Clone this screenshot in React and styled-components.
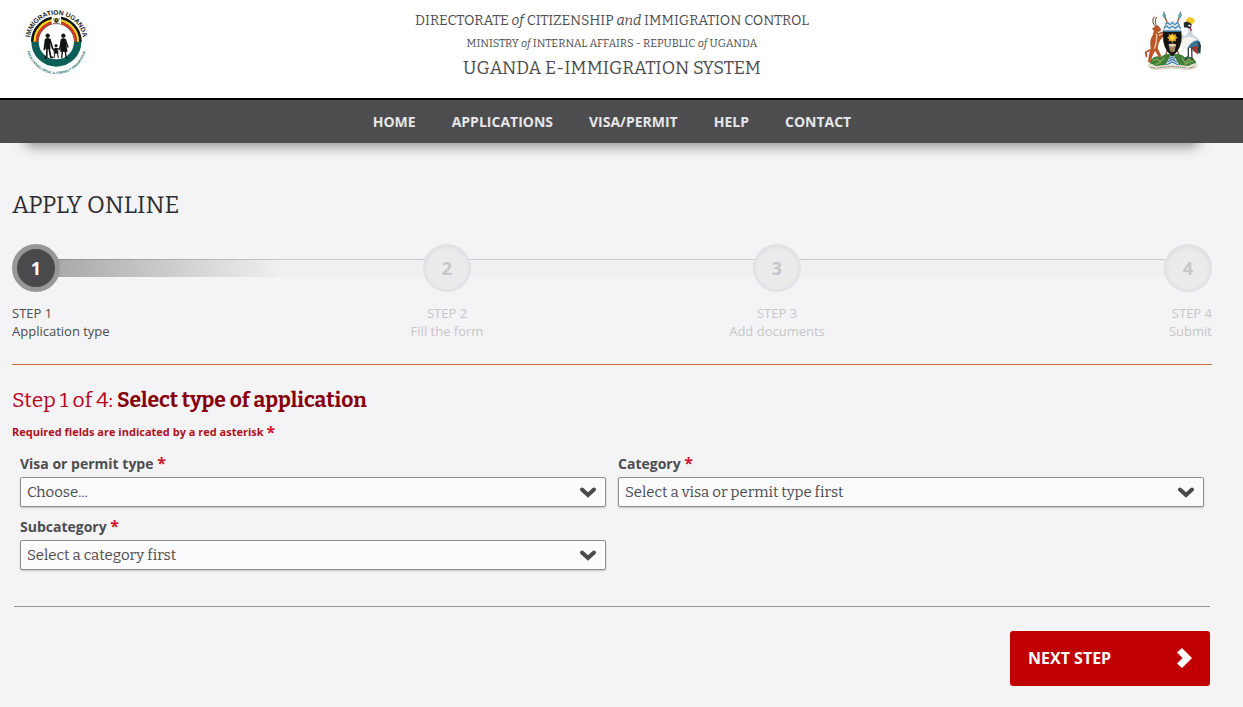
import { useState } from 'react'
import styled, { createGlobalStyle } from 'styled-components'

const serif = `'Bitter', 'DejaVu Serif Condensed', 'DejaVu Serif', serif`
const sans = `'Open Sans', 'Noto Sans', sans-serif`

const GlobalStyle = createGlobalStyle`
  * {
    box-sizing: border-box;
  }

  body {
    margin: 0;
    background: #f4f4f6;
    color: #4d4d4f;
    font-family: ${sans};
  }
`

const Header = styled.header`
  display: flex;
  justify-content: space-between;
  align-items: flex-start;
  padding: 6px 37px 0 18px;
  height: 98px;
  background: #fff;
`

const Titles = styled.div`
  padding-top: 4px;
  text-align: center;
  font-family: ${serif};
`

const Title = styled.p`
  margin: 0;
  font-size: ${(props) => props.$size}px;
  line-height: ${(props) => props.$line}px;
  white-space: nowrap;
`

const Nav = styled.nav`
  border-top: 2px solid #000;
  background: #4d4d4f;
`

const Menu = styled.ul`
  display: flex;
  justify-content: center;
  gap: 36px;
  margin: 0 31px 0 12px;
  padding: 0;
  list-style: none;
  box-shadow: 0 16px 14px -14px rgba(0, 0, 0, 0.5);
`

const MenuLink = styled.a`
  display: block;
  color: #e6e6e8;
  font-size: 14px;
  font-weight: 700;
  line-height: 43px;
  text-decoration: none;
`

const Main = styled.main`
  padding: 46px 31px 20px 12px;
`

const PageTitle = styled.h1`
  margin: 0;
  color: #2d2d2f;
  font-family: ${serif};
  font-size: 24px;
  font-weight: 400;
  line-height: 32px;
`

const Steps = styled.ol`
  display: grid;
  grid-template-columns: 9fr 11fr 11fr 9fr;
  margin: 23px 0 0;
  padding: 0 0 24px;
  border-bottom: 1px solid #c9703f;
  list-style: none;
`

const Step = styled.li`
  display: flex;
  flex-direction: column;
  align-items: ${(props) => props.$align};
  color: ${(props) => (props.$active ? '#4d4d4f' : '#c6c6c8')};
  font-size: 13px;
  line-height: 18px;

  /* the bar starts and ends behind the outer circles */
  &:first-child > div {
    background-position: right 15px;
    background-size: calc(100% - 24px) 18px;
  }

  &:last-child > div {
    background-size: calc(100% - 24px) 18px;
  }
`

const Track = styled.div`
  display: flex;
  justify-content: ${(props) => props.$align};
  width: 100%;
  margin-bottom: 12px;
  background-image: ${(props) =>
    props.$active
      ? 'linear-gradient(rgba(0, 0, 0, 0.16) 1px, transparent 1px), linear-gradient(90deg, #aaa 10%, #f0f0f1)'
      : 'linear-gradient(#c9cbca 1px, #f0f0f1 1px)'};
  background-position: left 15px;
  background-size: 100% 18px;
  background-repeat: no-repeat;
`

const Circle = styled.span`
  display: flex;
  align-items: center;
  justify-content: center;
  width: 48px;
  height: 48px;
  border: ${(props) => (props.$active ? '5px solid #979799' : '2px solid #e1e1e5')};
  border-radius: 50%;
  background: ${(props) => (props.$active ? '#4a4a4c' : '#ebebec')};
  box-shadow: ${(props) =>
    props.$active ? 'none' : 'inset 0 1px 4px rgba(0, 0, 0, 0.06)'};
  color: ${(props) => (props.$active ? '#fff' : '#c6c6c8')};
  font-size: 18px;
  font-weight: 700;
`

const SectionTitle = styled.h2`
  margin: 19px 0 0;
  color: #b8001a;
  font-family: ${serif};
  font-size: 21px;
  font-weight: 400;
  line-height: 32px;

  strong {
    color: #85000c;
    font-weight: 700;
  }
`

const Asterisk = styled.span`
  color: #d0142c;
  font-size: 16px;
  font-weight: 700;
  line-height: 1;
`

const Required = styled.p`
  margin: 7px 0 0;
  color: #b0101c;
  font-size: 11px;
  font-weight: 700;
  line-height: 18px;

  ${Asterisk} {
    vertical-align: -2px;
  }
`

const Fields = styled.div`
  display: grid;
  grid-template-columns: 1fr 1fr;
  gap: 9px 12px;
  padding: 12px 8px 0;
`

const Label = styled.label`
  display: block;
  height: 24px;
  font-size: 14px;
  font-weight: 700;
  line-height: 22px;
`

const SelectBox = styled.div`
  position: relative;

  svg {
    position: absolute;
    top: 10px;
    right: 10px;
    pointer-events: none;
  }
`

const Select = styled.select`
  display: block;
  width: 100%;
  height: 30px;
  padding: 0 36px 0 6px;
  appearance: none;
  border: 1px solid #8e8e90;
  border-radius: 2px;
  background: #fbfbfd;
  box-shadow: 0 1px 2px rgba(0, 0, 0, 0.2);
  color: #4d4d4f;
  font-family: ${serif};
  font-size: 15px;
`

const Actions = styled.div`
  display: flex;
  justify-content: flex-end;
  margin: 36px 2px 0;
  padding-top: 24px;
  border-top: 1px solid #959597;
`

const NextButton = styled.button`
  display: flex;
  align-items: center;
  justify-content: space-between;
  width: 200px;
  height: 55px;
  padding: 0 18px 2px;
  border: 0;
  border-radius: 3px;
  background: #c00000;
  color: #fff;
  font-family: ${sans};
  font-size: 16px;
  font-weight: 700;
`

const ImmigrationLogo = () => (
  <svg width='72' height='72' viewBox='24 18 216 216' role='img' aria-label='Immigration Uganda'>
    <path id='arc-top' d='M58 125 A81 81 0 0 1 220 125' fill='none' />
    <path id='arc-bottom' d='M49 132 A90 90 0 0 0 229 132' fill='none' />
    <circle cx='139' cy='125' r='64' fill='#fff' stroke='#0c5f57' strokeWidth='22' />
    <path d='M67 125 A72 72 0 0 1 211 125' fill='none' stroke='#151515' strokeWidth='8' />
    <path d='M74 125 A65 65 0 0 1 204 125' fill='none' stroke='#f7d31c' strokeWidth='7' />
    <path d='M81 125 A58 58 0 0 1 197 125' fill='none' stroke='#d63426' strokeWidth='8' />
    <rect x='125' y='48' width='28' height='25' fill='#fff' />
    <ellipse cx='139' cy='61' rx='5' ry='8' fill='#252821' />
    <path d='M130 54 l5 14 M148 54 l-5 14 M129 71 h20' stroke='#7c6b42' strokeWidth='3' />
    <circle cx='139' cy='60' r='2' fill='#f4c526' />
    <g fill='#111' stroke='#111' strokeLinecap='round'>
      <circle cx='113' cy='107' r='6' />
      <path d='M106 117 Q113 111 120 117 L121 146 L106 146Z' />
      <path d='M107 119 l-4 29 M120 119 l8 27 l7 7 M111 144 l-1 27 l-5 3 M117 144 l5 27 l5 1' fill='none' strokeWidth='5' />
      <circle cx='138' cy='137' r='4' />
      <path d='M134 144 h8 l3 16 h-13Z' />
      <path d='M135 159 l-3 15 M142 159 l3 14 M142 146 l8 2' fill='none' strokeWidth='3' />
      <circle cx='160' cy='107' r='6' />
      <path d='M153 118 Q160 111 167 118 L172 155 L151 155Z' />
      <path d='M155 119 l-4 19 l-3 10 M166 119 l8 22 M157 154 l-2 19 M166 154 l2 18 l5 2' fill='none' strokeWidth='4' />
    </g>
    <text fontFamily='Liberation Sans' fontSize='20' fontWeight='700' fill='#222' textAnchor='middle'>
      <textPath href='#arc-top' startOffset='50%'>
        IMMIGRATION UGANDA
      </textPath>
    </text>
    <text fontFamily='Liberation Sans' fontSize='10' fontStyle='italic' fontWeight='700' fill='#146c68' textAnchor='middle'>
      <textPath href='#arc-bottom' startOffset='50%'>
        FACILITATING LEGAL &amp; FRIENDLY IMMIGRATION
      </textPath>
    </text>
  </svg>
)

const CoatOfArms = () => (
  <svg width='72' height='72' viewBox='12 18 216 216' role='img' aria-label='Coat of arms of Uganda'>
    <path d='M104 48 L150 174 M149 48 L104 174' stroke='#9b5132' strokeWidth='4' />
    <path d='M101 32 l8 15 l-5 11 l-7 -11Z M152 32 l-8 15 l5 11 l7 -11Z' fill='#6f9eb5' />
    <path d='M58 187 Q72 163 91 171 Q110 157 127 165 Q149 157 164 172 Q187 163 199 188 L186 202 H71Z' fill='#3f7d39' />
    <path d='M68 182 l13 -5 l10 8 l12 -12 M155 173 l9 13 l12 -8 l13 8 M76 193 l17 -6 M164 192 l17 -6' fill='none' stroke='#86a957' strokeWidth='4' />
    {/* kob */}
    <path d='M74 80 L82 76 L92 85 L92 94 L84 95 L88 108 L104 95 L109 100 L91 120 L86 130 L83 144 L94 168 L88 173 L75 153 L68 166 L62 186 L54 186 L58 160 L62 144 Q57 122 67 108 L72 93 L66 86Z' fill='#bb5428' />
    <path d='M77 80 Q62 65 73 50 M83 80 Q70 67 80 51' fill='none' stroke='#6e392a' strokeWidth='3' />
    <path d='M80 101 Q82 124 73 146' fill='none' stroke='#f1c49d' strokeWidth='4' />
    <path d='M85 102 l18 -7 M61 149 l-14 8 l3 14' fill='none' stroke='#ae4925' strokeWidth='5' />
    {/* crested crane */}
    <path d='M172 80 Q178 96 167 108 Q156 106 151 99 L146 104 Q155 119 169 126 Q198 134 203 161 L212 139 Q210 110 188 104 Q190 94 183 80Z' fill='#cbd6de' />
    <path d='M164 121 Q188 107 211 126 L208 163 L197 147 L193 157 L183 143 L174 145Z' fill='#397596' />
    <path d='M154 119 Q177 100 203 120 Q179 125 172 147 L157 139Z' fill='#f5f5f3' stroke='#bcc5cb' />
    <path d='M203 122 l10 14 l-2 26 l-7 -8 l2 -17Z' fill='#25343f' />
    <path d='M182 142 l12 14 l11 8 l-3 -27Z' fill='#9d3734' />
    <path d='M175 143 v26 l-11 13 M185 142 l1 39' fill='none' stroke='#333b40' strokeWidth='4' />
    <path d='M167 69 Q167 56 176 52 Q190 49 195 62 L185 75Z' fill='#f2c927' />
    <path d='M161 68 Q175 60 185 73 L182 87 L173 83 L162 82Z' fill='#23262b' />
    <path d='M172 75 l10 -1 l-2 7Z' fill='#fff' />
    <path d='M181 84 l3 9' stroke='#c52b2b' strokeWidth='4' />
    {/* shield */}
    <path d='M108 69 Q127 61 145 69 Q158 89 154 124 Q149 153 127 169 Q104 153 100 124 Q96 89 108 69Z' fill='#171513' />
    <path d='M108 69 Q127 61 145 69 L151 84 L154 93 H100 L103 83Z' fill='#e7f0f5' />
    <path d='M106 73 l7 -5 l7 6 l7 -6 l8 6 l7 -6 l6 7 M102 85 l8 -7 l8 7 l9 -7 l9 7 l8 -7 l8 7 M101 93 H153' fill='none' stroke='#4f91b7' strokeWidth='4' />
    <path d='M127 99 l4 6 l7 -3 l-1 7 l6 4 l-6 4 l1 7 l-7 -2 l-4 6 l-4 -6 l-7 2 l1 -7 l-6 -4 l6 -4 l-1 -7 l7 3Z' fill='#e7a91f' />
    <circle cx='127' cy='113' r='7' fill='#f8d33b' />
    <path d='M116 134 Q127 128 138 134 L134 153 Q127 161 120 153Z' fill='#b09776' />
    <ellipse cx='127' cy='135' rx='11' ry='4' fill='#e1d3b3' />
    <path d='M120 140 l6 15 l7 -16' fill='none' stroke='#8c4d32' strokeWidth='2' />
    {/* river and scroll */}
    <path d='M121 169 h12 l16 29 h-44Z' fill='#e9f1f6' />
    <path d='M118 177 l9 -6 l9 6 M113 186 l14 -8 l14 8 M109 195 l18 -9 l18 9' fill='none' stroke='#3c78ad' strokeWidth='4' />
    <path d='M56 188 Q72 193 78 198 Q127 191 175 198 Q186 191 201 188 L203 201 L191 207 L174 211 Q127 202 79 211 L63 208 L53 200Z' fill='#e2decb' />
    <path d='M63 202 l14 3 M83 204 Q127 196 169 204 M177 205 l17 -5' fill='none' stroke='#77776c' strokeWidth='3' strokeDasharray='4 2' />
  </svg>
)

const ChevronDown = () => (
  <svg width='16' height='11' viewBox='0 0 16 11' aria-hidden='true'>
    <path d='M2 2.5 L8 8 L14 2.5' fill='none' stroke='#4a4a4c' strokeWidth='4' strokeLinecap='round' />
  </svg>
)

const ChevronRight = () => (
  <svg width='15' height='20' viewBox='0 0 15 20' aria-hidden='true'>
    <path d='M5 0 L15 10 L5 20 L0 15.5 L5.5 10 L0 4.5Z' fill='#fff' />
  </svg>
)

const menu = ['Home', 'Applications', 'Visa/Permit', 'Help', 'Contact']

const steps = [
  { name: 'Application type', align: 'flex-start' },
  { name: 'Fill the form', align: 'center' },
  { name: 'Add documents', align: 'center' },
  { name: 'Submit', align: 'flex-end' },
]

const fields = [
  { id: 'type', label: 'Visa or permit type', placeholder: 'Choose...' },
  { id: 'category', label: 'Category', placeholder: 'Select a visa or permit type first' },
  { id: 'subcategory', label: 'Subcategory', placeholder: 'Select a category first' },
]

const Field = ({ id, label, placeholder }) => (
  <div>
    <Label htmlFor={id}>
      {label} <Asterisk>*</Asterisk>
    </Label>
    <SelectBox>
      <Select id={id} name={id} required>
        <option value=''>{placeholder}</option>
      </Select>
      <ChevronDown />
    </SelectBox>
  </div>
)

const App = () => {
  const [current] = useState(0)

  return (
    <>
      <GlobalStyle />
      <Header>
        <ImmigrationLogo />
        <Titles>
          <Title $size={14} $line={22}>
            DIRECTORATE <em>of</em> CITIZENSHIP <em>and</em> IMMIGRATION CONTROL
          </Title>
          <Title $size={11} $line={24}>
            MINISTRY <em>of</em> INTERNAL AFFAIRS - REPUBLIC <em>of</em> UGANDA
          </Title>
          <Title $size={18} $line={24}>
            UGANDA E-IMMIGRATION SYSTEM
          </Title>
        </Titles>
        <CoatOfArms />
      </Header>

      <Nav>
        <Menu>
          {menu.map((item) => (
            <li key={item}>
              <MenuLink href='#'>{item.toUpperCase()}</MenuLink>
            </li>
          ))}
        </Menu>
      </Nav>

      <Main>
        <PageTitle>APPLY ONLINE</PageTitle>

        <Steps>
          {steps.map((step, i) => (
            <Step key={step.name} $align={step.align} $active={i === current}>
              <Track $align={step.align} $active={i === current}>
                <Circle $active={i === current}>{i + 1}</Circle>
              </Track>
              <span>STEP {i + 1}</span>
              <span>{step.name}</span>
            </Step>
          ))}
        </Steps>

        <form onSubmit={(event) => event.preventDefault()}>
          <SectionTitle>
            Step 1 of 4: <strong>Select type of application</strong>
          </SectionTitle>
          <Required>
            Required fields are indicated by a red asterisk <Asterisk>*</Asterisk>
          </Required>

          <Fields>
            {fields.map((field) => (
              <Field key={field.id} {...field} />
            ))}
          </Fields>

          <Actions>
            <NextButton type='submit'>
              NEXT STEP
              <ChevronRight />
            </NextButton>
          </Actions>
        </form>
      </Main>
    </>
  )
}

export default App
